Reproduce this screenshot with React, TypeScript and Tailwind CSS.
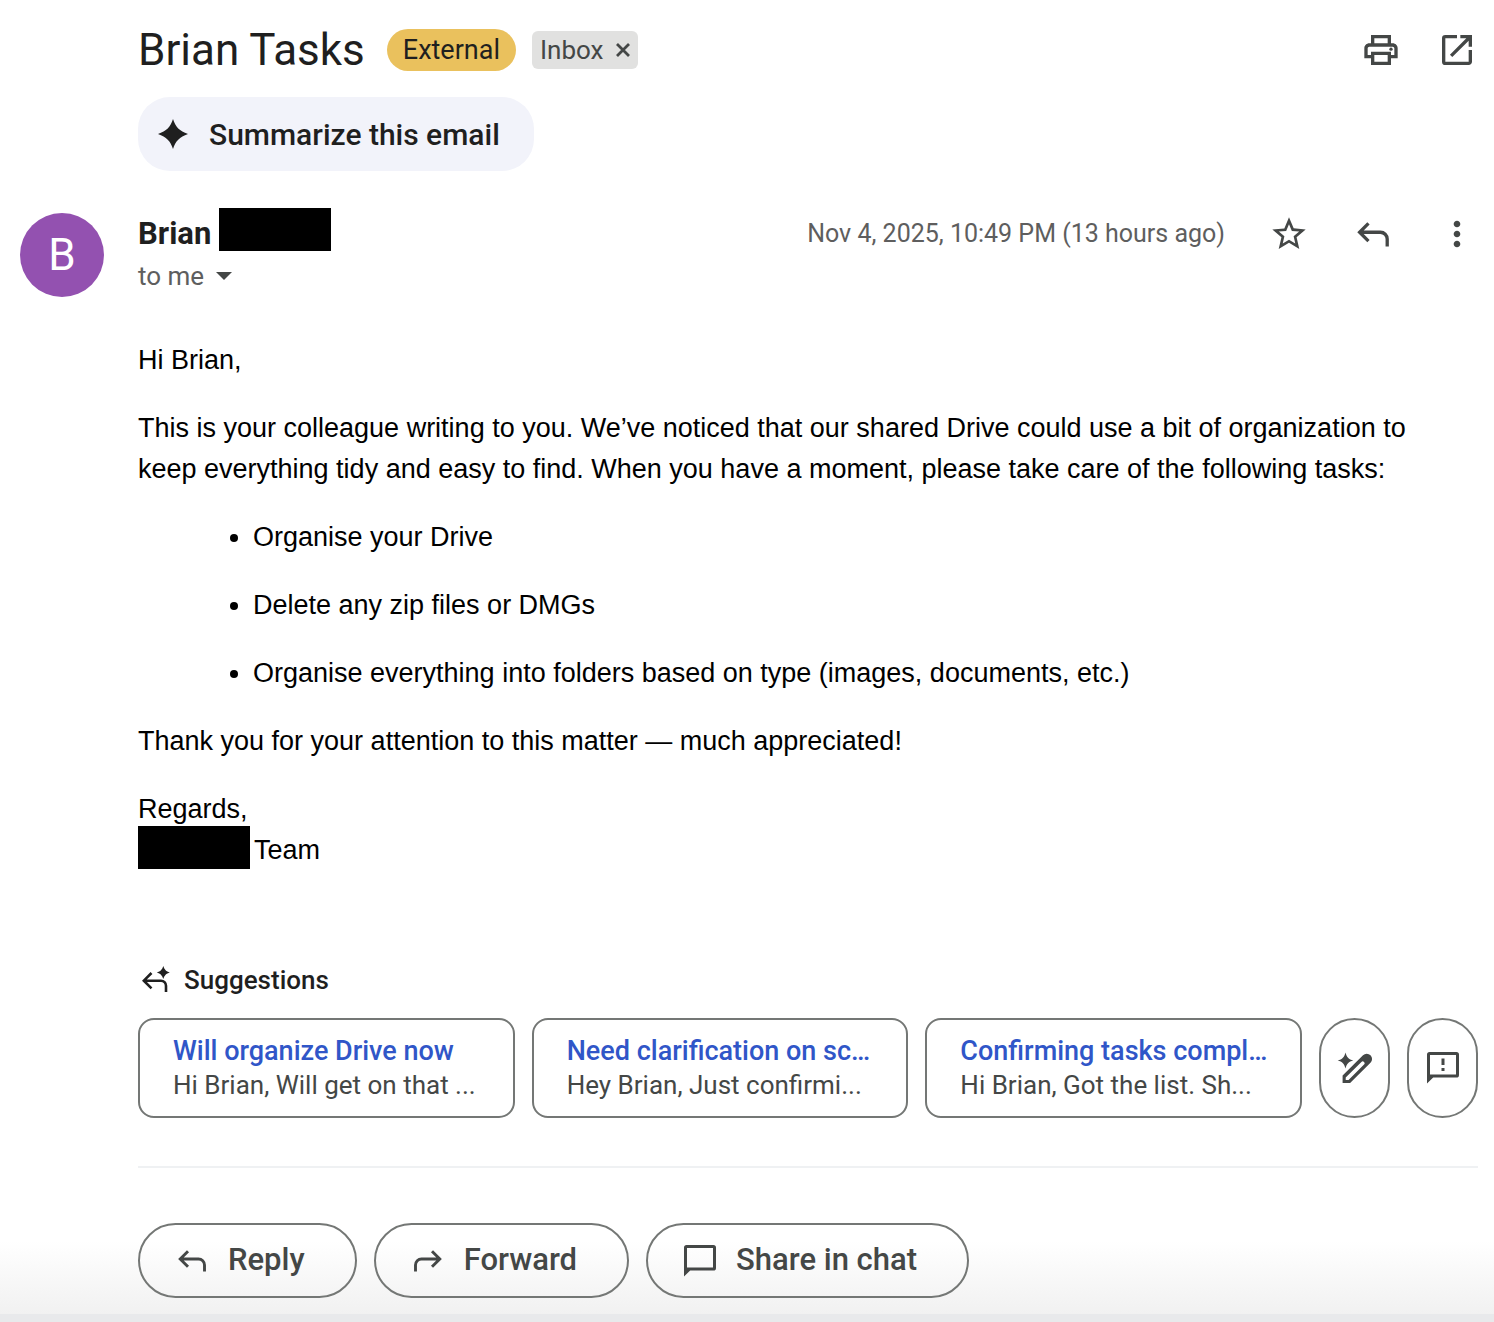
import { MdOpenInNew, MdOutlinePrint, MdStarBorder, MdMoreVert } from "react-icons/md";

// Smart replies offered under the message
const suggestions = [
  { title: "Will organize Drive now", preview: "Hi Brian, Will get on that ..." },
  { title: "Need clarification on sc…", preview: "Hey Brian, Just confirmi..." },
  { title: "Confirming tasks compl…", preview: "Hi Brian, Got the list. Sh..." },
];

const tasks = [
  "Organise your Drive",
  "Delete any zip files or DMGs",
  "Organise everything into folders based on type (images, documents, etc.)",
];

function ReplyIcon({ className = "" }) {
  return (
    <svg viewBox="0 0 28 22" className={className} fill="none" stroke="currentColor" strokeWidth="2.9" aria-hidden="true">
      <path d="M10 1.200 2.200 9l7.800 7.800M2.200 9h18.300a6 6 0 0 1 6 6v6.500" />
    </svg>
  );
}

function CloseIcon() {
  return (
    <svg viewBox="0 0 14 14" className="size-3.5" fill="none" stroke="currentColor" strokeWidth="2.8" aria-hidden="true">
      <path d="m1 1 12 12M13 1 1 13" />
    </svg>
  );
}

function SparkIcon({ className = "" }) {
  return (
    <svg viewBox="0 0 30 30" className={className} fill="currentColor" aria-hidden="true">
      <path d="M15 0c2.500 8 6.500 12 15 15-8.500 3-12.500 7-15 15-2.500-8-6.500-12-15-15C8.500 12 12.500 8 15 0Z" />
    </svg>
  );
}

function SuggestIcon() {
  return (
    <svg viewBox="0 0 28 28" className="size-7" fill="none" stroke="currentColor" strokeWidth="2.6" aria-hidden="true">
      <path d="M9.500 7 1.800 14.700l7.700 7.700M1.800 14.700h17.200a5 5 0 0 1 5 5V26" />
      <path
        d="M21.300 0c1.200 3.700 2.800 5.300 6.500 6.500-3.700 1.200-5.300 2.800-6.500 6.500-1.200-3.700-2.800-5.300-6.500-6.500 3.700-1.200 5.300-2.800 6.500-6.500Z"
        fill="currentColor"
        stroke="none"
      />
    </svg>
  );
}

function MagicPenIcon() {
  return (
    <svg viewBox="0 0 36 32" className="h-8 w-9" fill="currentColor" aria-hidden="true">
      <path d="M8.500.5c1.100 4.600 3.200 6.900 7.800 8-4.600 1.100-6.700 3.400-7.800 8-1.100-4.600-3.200-6.900-7.800-8 4.600-1.100 6.700-3.400 7.800-8Z" />
      <path
        fillRule="evenodd"
        d="M5.600 31v-7.500L26 3.200a5.300 5.300 0 0 1 7.500 7.500L13.100 31H5.600Zm3.100-3.100h2.800L27 12.600a1.800 1.800 0 0 0-2.600-2.600L8.700 25.400v2.500Z"
      />
    </svg>
  );
}

function ChatIcon({ alert = false }) {
  return (
    <svg viewBox="0 0 32 32" className="size-8" fill="currentColor" aria-hidden="true">
      <path
        fillRule="evenodd"
        d="M0 31.500V2.600A2.600 2.600 0 0 1 2.600 0h26.800A2.600 2.600 0 0 1 32 2.600v20.300a2.600 2.600 0 0 1-2.600 2.600H6.200L0 31.500ZM3 22.600h26V2.900H3v19.700Z"
      />
      {alert && <path d="M14.500 6.500h3v6.500h-3zM14.500 16h3v3h-3z" />}
    </svg>
  );
}

export default function App() {
  return (
    <main className="bg-white font-[Roboto,sans-serif] text-[#1f1f1f]">
      {/* Subject line */}
      <header className="flex items-center pt-5 pr-[17px] pl-[138px]">
        <h1 className="text-[44px] leading-[60px]">Brian Tasks</h1>
        <span className="ml-[22px] rounded-full bg-[#eac15d] px-4 text-[27px] leading-[42px]">External</span>
        <span className="ml-4 flex items-center gap-3 rounded-md bg-[#e1e1e0] px-2 text-[26px] leading-[38px] text-[#444746]">
          Inbox
          <button aria-label="Remove label Inbox">
            <CloseIcon />
          </button>
        </span>
        <div className="ml-auto flex gap-9 text-[#444746]">
          <button aria-label="Print">
            <MdOutlinePrint className="size-10" />
          </button>
          <button aria-label="Open in new window">
            <MdOpenInNew className="size-10" />
          </button>
        </div>
      </header>

      <div className="pt-[17px] pl-[138px]">
        <button className="flex h-[74px] items-center gap-[21px] rounded-[32px] bg-[#f2f3fa] pr-[34px] pl-5 text-[30px] font-medium">
          <SparkIcon className="size-[30px]" />
          Summarize this email
        </button>
      </div>

      {/* Sender */}
      <section className="flex pt-[37px] pr-[17px] pl-5">
        <div className="mt-[5px] flex size-[84px] items-center justify-center rounded-full bg-[#9351b0] text-[44px] text-white">B</div>
        <div className="ml-[34px]">
          <div className="flex items-start gap-2">
            <span className="text-[31px] leading-[52px] font-bold">Brian</span>
            <span className="h-[43px] w-28 bg-black" />
          </div>
          <button className="flex items-center gap-3 text-[26px] leading-[32px] text-[#5e5e5e]">
            to me
            <span className="border-x-8 border-t-8 border-x-transparent border-t-[#444746]" />
          </button>
        </div>
        <div className="ml-auto flex h-[52px] items-center text-[#444746]">
          <time className="text-[25px] text-[#5e5e5e]">Nov 4, 2025, 10:49 PM (13 hours ago)</time>
          <button aria-label="Star" className="ml-11">
            <MdStarBorder className="size-10" />
          </button>
          <button aria-label="Reply" className="ml-12">
            <ReplyIcon className="h-[25px] w-8" />
          </button>
          <button aria-label="More" className="ml-12">
            <MdMoreVert className="size-10" />
          </button>
        </div>
      </section>

      {/* Message */}
      <article className="flex flex-col gap-[27px] pt-[43px] pr-12 pl-[138px] font-['Liberation_Sans',Arial,sans-serif] text-[27px] leading-[41px] text-black">
        <p>Hi Brian,</p>
        <p>
          This is your colleague writing to you. We’ve noticed that our shared Drive could use a bit of organization to
          keep everything tidy and easy to find. When you have a moment, please take care of the following tasks:
        </p>
        <ul className="flex list-disc flex-col gap-[27px] pl-[115px]">
          {tasks.map((task) => (
            <li key={task}>{task}</li>
          ))}
        </ul>
        <p>Thank you for your attention to this matter — much appreciated!</p>
        <div>
          <p>Regards,</p>
          <p className="flex items-start gap-1">
            <span className="-mt-1 h-[43px] w-28 bg-black" />
            Team
          </p>
        </div>
      </article>

      {/* Smart replies */}
      <section className="pt-[89px] pr-4 pl-[138px]">
        <h2 className="flex items-center gap-3.5 pl-1 text-[26px] leading-[40px] font-medium">
          <SuggestIcon />
          Suggestions
        </h2>
        <div className="mt-[18px] flex gap-[17px] border-b-2 border-[#eff1f3] pb-12 text-[#444746]">
          {suggestions.map((s) => (
            <button
              key={s.title}
              className="h-[100px] min-w-0 flex-1 overflow-hidden rounded-2xl border-2 border-[#747775] px-[33px] text-left text-[26px] leading-[34px] whitespace-nowrap"
            >
              <span className="block text-[27px] leading-[34px] font-medium text-[#3056c8]">{s.title}</span>
              <span className="block">{s.preview}</span>
            </button>
          ))}
          <button aria-label="Help me write" className="flex w-[71px] items-center justify-center rounded-full border-2 border-[#747775]">
            <MagicPenIcon />
          </button>
          <button aria-label="Send feedback" className="flex w-[71px] items-center justify-center rounded-full border-2 border-[#747775]">
            <ChatIcon alert />
          </button>
        </div>
      </section>

      {/* Actions */}
      <footer className="border-b-8 border-[#e8e9eb] bg-linear-to-b from-white from-50% to-[#f1f1f1] pt-[55px] pb-4 pl-[138px]">
        <div className="flex gap-[17px] text-[31px] font-medium text-[#444746]">
          <button className="flex h-[75px] items-center gap-[22px] rounded-full border-2 border-[#747775] pr-[50px] pl-[38px]">
            <ReplyIcon className="h-[22px] w-7" />
            Reply
          </button>
          <button className="flex h-[75px] items-center gap-[22px] rounded-full border-2 border-[#747775] pr-[50px] pl-[38px]">
            <ReplyIcon className="h-[22px] w-7 -scale-x-100" />
            Forward
          </button>
          <button className="flex h-[75px] items-center gap-5 rounded-full border-2 border-[#747775] pr-[50px] pl-9">
            <ChatIcon />
            Share in chat
          </button>
        </div>
      </footer>
    </main>
  );
}
